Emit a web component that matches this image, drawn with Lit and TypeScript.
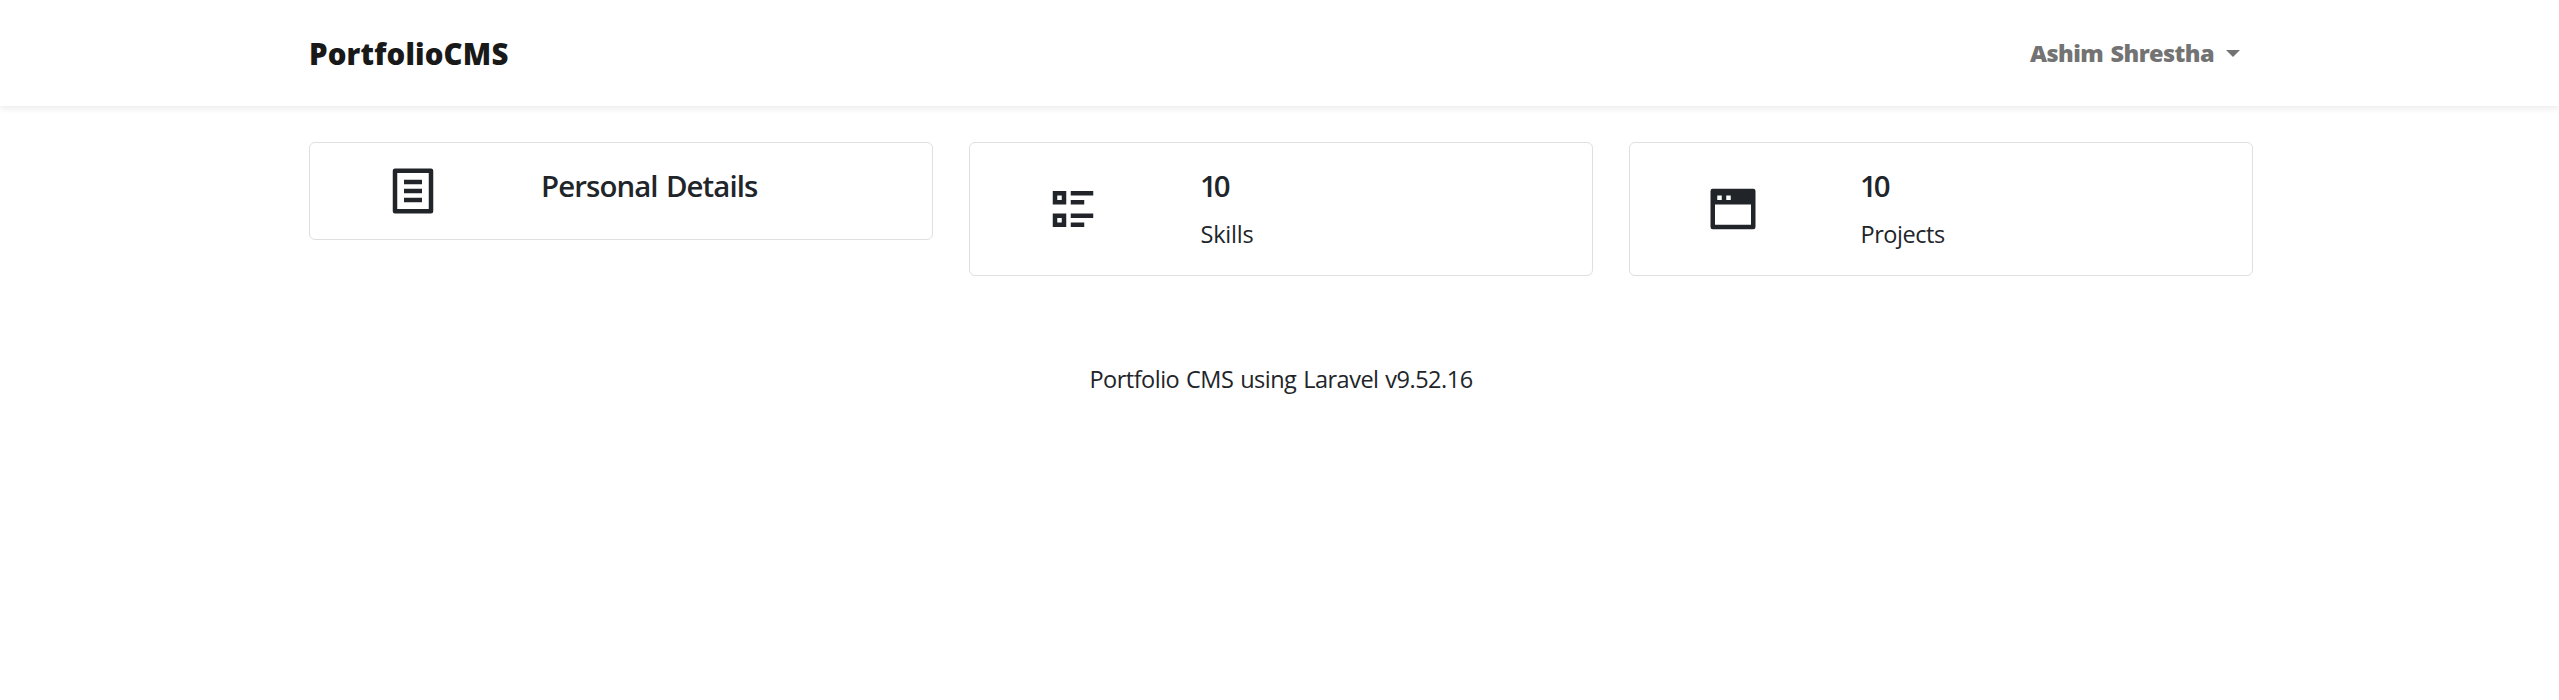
import { LitElement, html, css, svg } from "lit";
import { customElement } from "lit/decorators.js";

const icons = {
  detail: svg`<path fill-rule="evenodd" d="M4 2h16a1 1 0 0 1 1 1v18a1 1 0 0 1-1 1H4a1 1 0 0 1-1-1V3a1 1 0 0 1 1-1zm1 2v16h14V4H5z"/><path d="M8 7h8v2H8zM8 11h8v2H8zM8 15h8v2H8z"/>`,
  list: svg`<path fill-rule="evenodd" d="M3 4h6v6H3zM5 6v2h2V6zM3 14h6v6H3zM5 16v2h2v-2z"/><path d="M11 4h10v2H11zM11 8h6v2h-6zM11 14h10v2H11zM11 18h6v2h-6z"/>`,
  window: svg`<path fill-rule="evenodd" d="M3 3h18a1 1 0 0 1 1 1v16a1 1 0 0 1-1 1H3a1 1 0 0 1-1-1V4a1 1 0 0 1 1-1zM4 10v9h16v-9zM5 6v2h2V6zM9 6v2h2V6z"/>`,
};

const cards = [
  { icon: icons.detail, title: "Personal Details", cls: "wide", label: "" },
  { icon: icons.list, title: "10", cls: "count", label: "Skills" },
  { icon: icons.window, title: "10", cls: "count", label: "Projects" },
];

@customElement("app-root")
export class AppRoot extends LitElement {
  static styles = css`
    :host {
      display: block;
      height: 700px;
      overflow: hidden;
      background: #fff;
      color: #212529;
      font: 400 23.5px/36px "Open Sans", "Noto Sans", sans-serif;
    }
    * { box-sizing: border-box; }
    .container { width: 1944px; margin-left: 309px; }
    nav { background: #fff; box-shadow: 0 3px 6px rgba(0, 0, 0, 0.075); }
    .bar { display: flex; height: 106px; align-items: center; justify-content: space-between; }
    .brand { padding-top: 1px; font-size: 29.4px; font-weight: 800; color: #191919; letter-spacing: 0.15px; }
    .user { display: flex; align-items: center; padding-right: 13px; font-weight: 800; color: #737373; letter-spacing: -0.6px; word-spacing: 2px; }
    .caret { margin-left: 12px; border: 7px solid transparent; border-top-color: #737373; border-bottom: 0; }
    .cards { display: grid; grid-template-columns: repeat(3, 624px); gap: 36px; align-items: start; padding-top: 36px; }
    .card { display: grid; grid-template-columns: 206px 1fr; align-items: center; border: 1px solid #dfdfdf; border-radius: 6px; background: #fff; }
    svg { width: 54px; height: 54px; justify-self: center; fill: #212529; display: block; }
    .body { padding: 25px 24px 23px; }
    h5 { margin: 0 0 12px; font-size: 29.4px; line-height: 36px; font-weight: 600; }
    .wide { letter-spacing: -0.9px; word-spacing: 1.5px; padding-left: 1px; }
    .count { letter-spacing: -3px; }
    p { margin: 0; padding-left: 0.5px; letter-spacing: -0.45px; }
    .skills { letter-spacing: -0.2px; }
    footer { padding-top: 85px; text-align: center; letter-spacing: -0.5px; word-spacing: 1.2px; }
  `;

  render() {
    return html`
      <nav>
        <div class="container bar">
          <span class="brand">PortfolioCMS</span>
          <span class="user"><span>Ashim Shrestha</span><i class="caret"></i></span>
        </div>
      </nav>
      <main class="container cards">
        ${cards.map(
          (c) => html`<section class="card">
            <svg viewBox="0 0 24 24">${c.icon}</svg>
            <div class="body">
              <h5 class=${c.cls}>${c.title}</h5>
              ${c.label ? html`<p class=${c.label.toLowerCase()}>${c.label}</p>` : ""}
            </div>
          </section>`
        )}
      </main>
      <footer class="container">Portfolio CMS using Laravel v9.52.16</footer>
    `;
  }
}
